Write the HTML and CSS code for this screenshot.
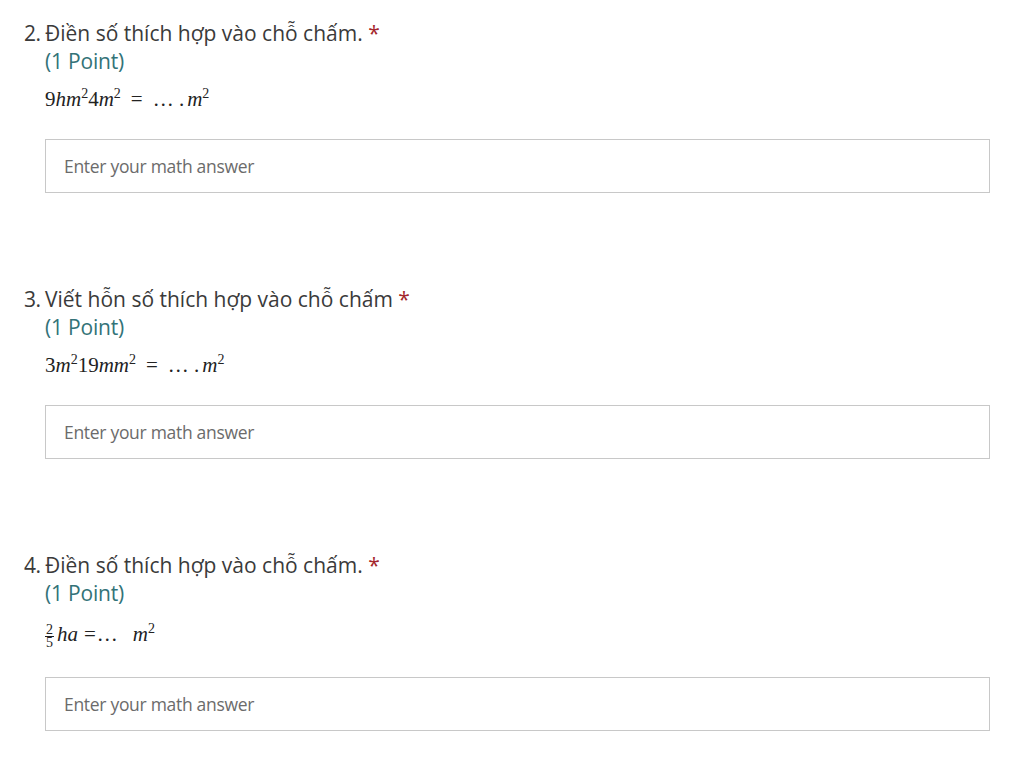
FILE: index.html
```html
<!DOCTYPE html>
<html lang="vi">
<head>
<meta charset="utf-8">
<title>Form</title>
<link rel="stylesheet" href="styles.css">
</head>
<body>
<main class="form">
  <section class="question">
    <div class="title-row">
      <span class="num">2.</span>
      <span class="title">Điền số thích hợp vào chỗ chấm.<span class="req"> *</span></span>
    </div>
    <div class="body">
      <div class="points">(1 Point)</div>
      <div class="math">9<i>hm</i><sup>2</sup>4<i>m</i><sup>2</sup><span class="op">=</span>… .<i class="gap">m</i><sup>2</sup></div>
      <div class="answer">Enter your math answer</div>
    </div>
  </section>
  <section class="question">
    <div class="title-row">
      <span class="num">3.</span>
      <span class="title">Viết hỗn số thích hợp vào chỗ chấm<span class="req"> *</span></span>
    </div>
    <div class="body">
      <div class="points">(1 Point)</div>
      <div class="math">3<i>m</i><sup>2</sup>19<i>mm</i><sup>2</sup><span class="op">=</span>… .<i class="gap">m</i><sup>2</sup></div>
      <div class="answer">Enter your math answer</div>
    </div>
  </section>
  <section class="question">
    <div class="title-row">
      <span class="num">4.</span>
      <span class="title">Điền số thích hợp vào chỗ chấm.<span class="req"> *</span></span>
    </div>
    <div class="body">
      <div class="points">(1 Point)</div>
      <div class="math frac-line"><span class="frac"><span class="fn">2</span><span class="fd">5</span></span><i>ha</i><span class="eq">=…</span><i class="gap2">m</i><sup>2</sup></div>
      <div class="answer">Enter your math answer</div>
    </div>
  </section>
</main>
</body>
</html>
```
FILE: styles.css
```css
html, body {
  margin: 0;
  padding: 0;
  background: #ffffff;
}
.form {
  padding: 19px 34px 0 24px;
  font-family: "Open Sans", "Noto Sans", sans-serif;
  color: #3a3a3a;
}
.question {
  margin-bottom: 92px;
}
.question:last-child {
  margin-bottom: 0;
}
.title-row {
  display: flex;
  font-size: 21px;
  line-height: 28px;
  letter-spacing: 0;
}
.num {
  width: 21px;
  flex: none;
  letter-spacing: -0.5px;
}
.req {
  color: #a4262c;
}
.body {
  padding-left: 21px;
}
.points {
  font-size: 21px;
  line-height: 28px;
  color: #337378;
  letter-spacing: -0.2px;
}
.math {
  font-family: "Liberation Serif", "Times New Roman", serif;
  font-size: 21px;
  line-height: 24px;
  height: 24px;
  margin-top: 12px;
  color: #222;
  white-space: nowrap;
}
.math sup {
  font-size: 14px;
  line-height: 0;
  vertical-align: 8px;
}
.math .op {
  margin: 0 10px;
}
.math .gap {
  margin-left: 3px;
}
.frac-line {
  height: 30px;
  line-height: 30px;
}
.frac {
  display: inline-block;
  text-align: center;
  font-size: 14px;
  line-height: 12px;
  vertical-align: -6px;
  margin-right: 3px;
}
.fn, .fd {
  display: block;
  padding: 0 1px;
}
.fn {
  border-bottom: 1px solid #222;
}
.eq {
  margin-left: 6px;
  letter-spacing: 1px;
}
.gap2 {
  margin-left: 14px;
}
.answer {
  margin-top: 28px;
  border: 1px solid #c8c8c8;
  box-sizing: border-box;
  height: 54px;
  padding-left: 18px;
  display: flex;
  align-items: center;
  font-size: 17.5px;
  color: #6b6b6b;
  letter-spacing: -0.3px;
}
```
